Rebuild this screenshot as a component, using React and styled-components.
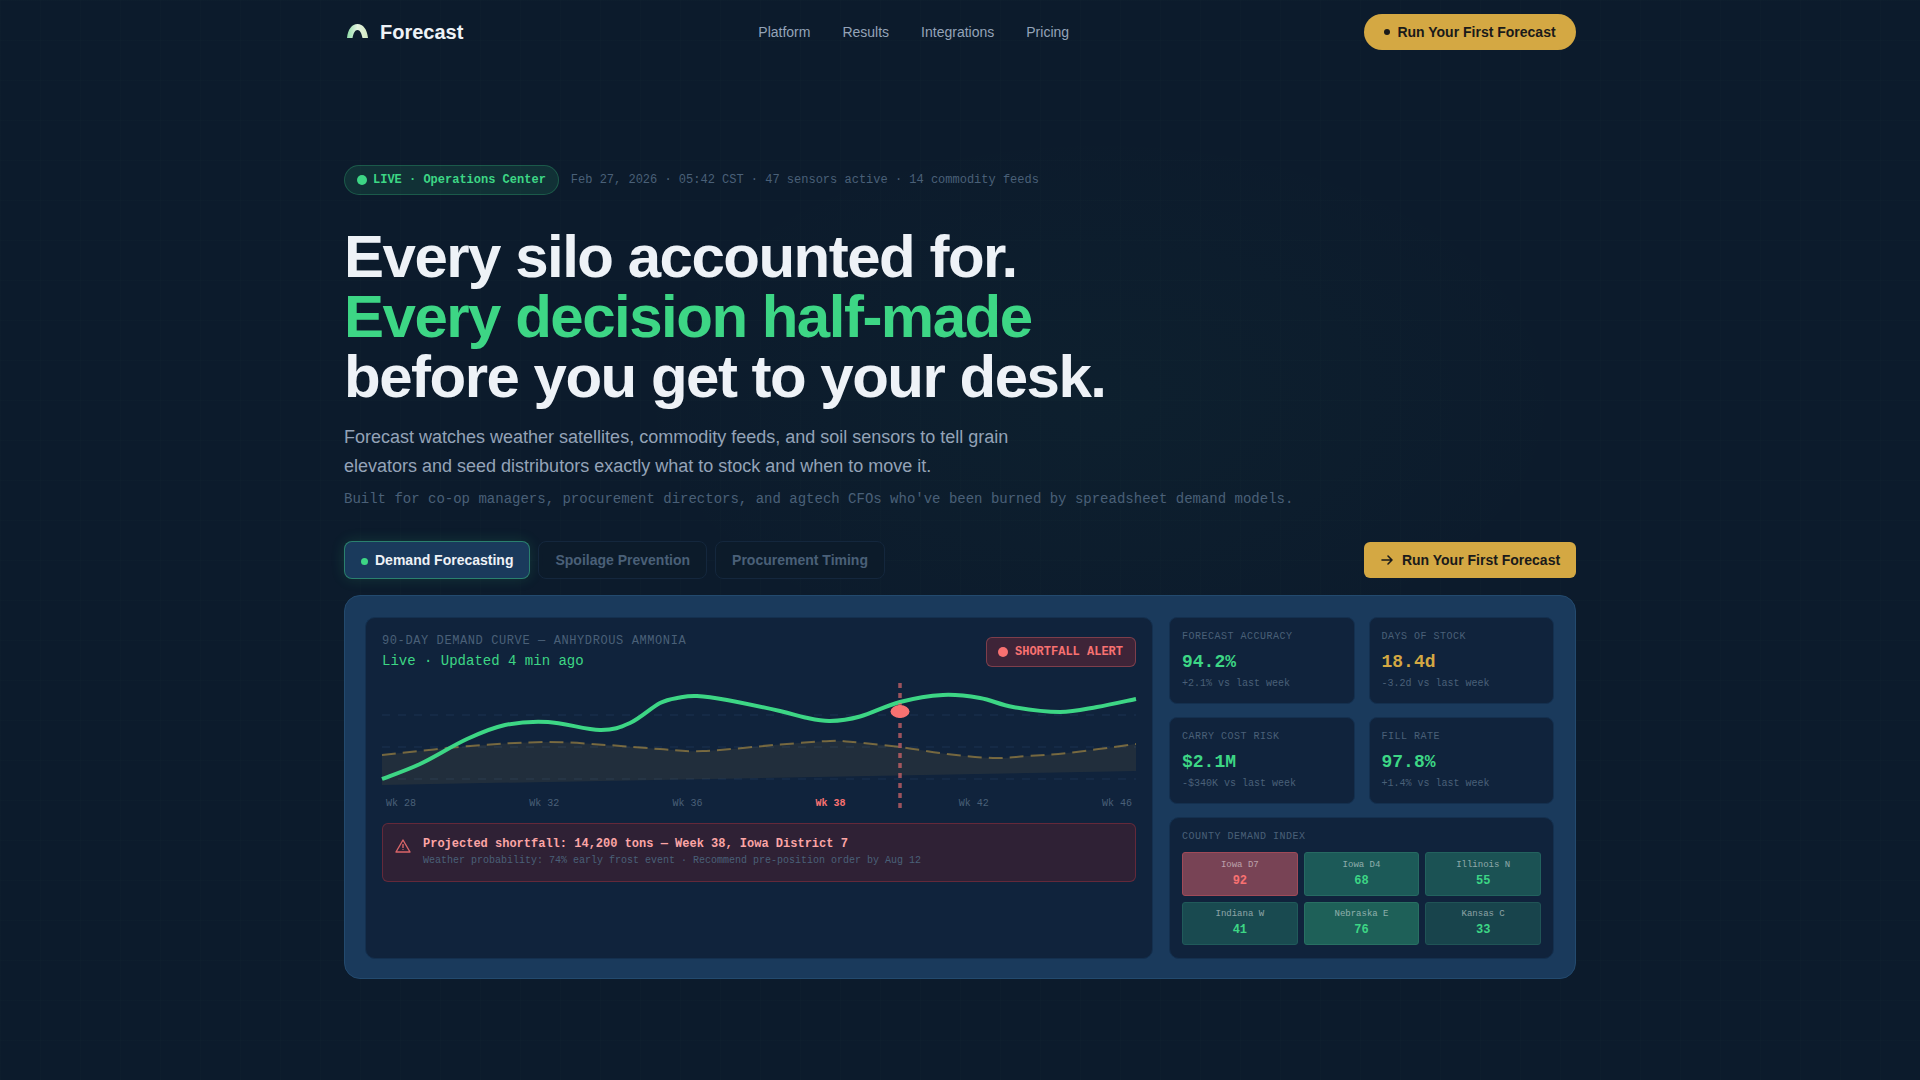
import React from "react";
import styled, { createGlobalStyle } from "styled-components";

const MONO = `"Liberation Mono", monospace`;
const SANS = `"Liberation Sans", Arial, sans-serif`;
const GREEN = "#3dd685";
const GOLD = "#d4a843";
const RED = "#f87171";
const CARD = "#10233c";

const Global = createGlobalStyle`
  html, body { margin: 0; padding: 0; }
  body {
    min-height: 100vh;
    font-family: ${SANS};
    color: #eef2f7;
    background-color: #0c1b2c;
    background-image:
      radial-gradient(ellipse 700px 400px at 1100px 400px, rgba(61,214,133,0.025), transparent 70%),
      linear-gradient(rgba(140,200,180,0.012) 1px, transparent 1px),
      linear-gradient(90deg, rgba(140,200,180,0.012) 1px, transparent 1px);
    background-size: 100% 100%, 40px 40px, 40px 40px;
  }
  * { box-sizing: border-box; }
`;

const Page = styled.div`
  width: 1280px;
  margin: 0 auto;
  padding: 0 24px;
`;
const Nav = styled.nav`
  height: 64px;
  display: flex;
  align-items: center;
  justify-content: space-between;
`;
const Brand = styled.div`
  display: flex;
  align-items: center;
  gap: 12px;
  font-size: 20px;
  font-weight: 600;
  color: #eef2f7;
  padding-left: 3px;
`;
const LogoSvg = styled.svg`
  margin-bottom: 3px;
`;
const NavLinks = styled.div`
  display: flex;
  gap: 32px;
  font-size: 14px;
  color: #94a3b8;
`;
const NavButton = styled.button`
  height: 36px;
  width: 212px;
  border: none;
  border-radius: 18px;
  background: ${GOLD};
  color: #1a1a1a;
  font: 700 14px ${SANS};
  display: flex;
  align-items: center;
  justify-content: center;
  gap: 7px;
  padding: 0;
`;
const BlackDot = styled.span`
  width: 6px;
  height: 6px;
  border-radius: 50%;
  background: #1a1a1a;
`;
const Hero = styled.main`
  padding-top: 101px;
`;
const Status = styled.div`
  display: flex;
  align-items: center;
  gap: 12px;
`;
const Pill = styled.div`
  height: 30px;
  padding: 0 12px;
  display: flex;
  align-items: center;
  gap: 6px;
  border-radius: 15px;
  background: rgba(61,214,133,0.12);
  border: 1px solid rgba(61,214,133,0.25);
  color: ${GREEN};
  font: 700 12px ${MONO};
`;
const PillDot = styled.span`
  width: 10px;
  height: 10px;
  border-radius: 50%;
  background: ${GREEN};
`;
const Meta = styled.span`
  font: 12px ${MONO};
  color: #4a6078;
`;
const Title = styled.h1`
  margin: 32px 0 0;
  font-size: 60px;
  line-height: 60px;
  font-weight: 700;
  letter-spacing: -1.5px;
  color: #eef2f7;
`;
const Accent = styled.span`
  display: block;
  color: ${GREEN};
`;
const Lead = styled.p`
  margin: 16px 0 0;
  width: 720px;
  font-size: 18px;
  line-height: 29px;
  color: #94a3b8;
`;
const Audience = styled.p`
  margin: 8px 0 0;
  font: 14px/21px ${MONO};
  color: #4a6078;
`;
const TabRow = styled.div`
  margin-top: 31px;
  display: flex;
  align-items: center;
  gap: 8px;
`;
const Tab = styled.button`
  height: 38px;
  padding: 0 16px;
  border-radius: 8px;
  font: 700 14px ${SANS};
  display: flex;
  align-items: center;
  gap: 7px;
  color: ${(p) => (p.$active ? "#eef2f7" : "#4a6078")};
  background: ${(p) => (p.$active ? "#1a3a5c" : "rgba(13,27,42,0.85)")};
  border: 1px solid ${(p) => (p.$active ? "rgba(61,214,133,0.45)" : "#14273d")};
  box-shadow: ${(p) => (p.$active ? "0 0 14px rgba(61,214,133,0.15)" : "none")};
`;
const TabDot = styled.span`
  width: 7px;
  height: 7px;
  margin-top: 3px;
  border-radius: 50%;
  background: ${GREEN};
`;
const RunButton = styled.button`
  margin-left: auto;
  height: 36px;
  width: 212px;
  border: none;
  border-radius: 6px;
  background: ${GOLD};
  color: #1a1a1a;
  font: 700 14px ${SANS};
  display: flex;
  align-items: center;
  justify-content: center;
  gap: 8px;
  padding: 0;
`;
const Panel = styled.section`
  margin-top: 16px;
  height: 384px;
  padding: 21px 21px 20px 20px;
  border-radius: 16px;
  background: #1a3a5c;
  border: 1px solid #234a6e;
  display: grid;
  grid-template-columns: 788px 1fr;
  gap: 16px;
`;
const ChartCard = styled.div`
  border-radius: 10px;
  background: ${CARD};
  border: 1px solid #14304f;
  padding: 16px 16px 15px 16px;
`;
const ChartHead = styled.div`
  display: flex;
  justify-content: space-between;
  align-items: flex-start;
`;
const ChartTitle = styled.div`
  font: 12px/14px ${MONO};
  letter-spacing: 0.6px;
  color: #4a6078;
`;
const ChartLive = styled.div`
  margin-top: 5px;
  font: 14px/16px ${MONO};
  color: ${GREEN};
`;
const AlertBadge = styled.div`
  margin-top: 3px;
  height: 30px;
  width: 150px;
  padding: 0 11px;
  display: flex;
  align-items: center;
  gap: 7px;
  border-radius: 6px;
  background: rgba(150,40,50,0.35);
  border: 1px solid rgba(248,113,113,0.35);
  color: ${RED};
  font: 700 12px ${MONO};
  white-space: nowrap;
`;
const AlertDot = styled.span`
  flex: none;
  width: 10px;
  height: 10px;
  border-radius: 50%;
  background: ${RED};
`;
const ChartArea = styled.div`
  margin-top: 14px;
`;
const ChartSvg = styled.svg`
  display: block;
  width: 754px;
  height: 107px;
  overflow: visible;
`;
const Weeks = styled.div`
  margin-top: 8px;
  padding: 0 4px;
  display: flex;
  justify-content: space-between;
  font: 10px/12px ${MONO};
  color: #4a6078;
`;
const Week = styled.span`
  color: ${(p) => (p.$hot ? RED : "inherit")};
  font-weight: ${(p) => (p.$hot ? 700 : 400)};
`;
const Shortfall = styled.div`
  margin-top: 13px;
  height: 59px;
  padding: 0 12px;
  display: flex;
  align-items: center;
  gap: 12px;
  border-radius: 6px;
  background: rgba(120,30,40,0.3);
  border: 1px solid rgba(200,60,70,0.35);
`;
const ShortfallBody = styled.div`
  margin-bottom: 2px;
`;
const ShortfallTitle = styled.div`
  font: 700 12px/15px ${MONO};
  color: #fca5a5;
`;
const ShortfallSub = styled.div`
  margin-top: 3px;
  font: 10px/12px ${MONO};
  color: #4a6078;
`;
const WarnSvg = styled.svg`
  flex: none;
  margin-bottom: 14px;
`;
const Side = styled.div`
  display: flex;
  flex-direction: column;
  gap: 13px;
`;
const Metrics = styled.div`
  display: grid;
  grid-template-columns: 1fr 1fr;
  gap: 13px 14px;
`;
const Metric = styled.div`
  height: 87px;
  padding: 13px 12px;
  border-radius: 8px;
  background: ${CARD};
  border: 1px solid #14304f;
`;
const Label = styled.div`
  font: 10px/12px ${MONO};
  letter-spacing: 0.5px;
  color: #4a6078;
`;
const Value = styled.div`
  margin-top: 9px;
  font: 700 18px/20px ${MONO};
  color: ${(p) => p.$color};
`;
const Delta = styled.div`
  margin-top: 6px;
  font: 10px/12px ${MONO};
  color: #4a6078;
`;
const County = styled.div`
  flex: 1;
  padding: 13px 12px;
  border-radius: 10px;
  background: ${CARD};
  border: 1px solid #14304f;
`;
const CountyGrid = styled.div`
  margin-top: 9px;
  display: grid;
  grid-template-columns: repeat(3, 1fr);
  gap: 6px;
`;
const Cell = styled.div`
  height: 43.5px;
  border-radius: 3px;
  display: flex;
  flex-direction: column;
  align-items: center;
  justify-content: center;
  gap: 3px;
  background: ${(p) => p.$bg};
  border: 1px solid ${(p) => p.$line};
`;
const CellName = styled.div`
  font: 9px/11px ${MONO};
  color: rgba(255,255,255,0.5);
`;
const CellValue = styled.div`
  font: 700 12px/14px ${MONO};
  color: ${(p) => p.$color};
`;

function smooth(pts) {
  let d = `M${pts[0][0]} ${pts[0][1]}`;
  for (let i = 0; i < pts.length - 1; i++) {
    const p0 = pts[i - 1] || pts[i];
    const p1 = pts[i];
    const p2 = pts[i + 1];
    const p3 = pts[i + 2] || p2;
    const c1x = p1[0] + (p2[0] - p0[0]) / 6;
    const c1y = p1[1] + (p2[1] - p0[1]) / 6;
    const c2x = p2[0] - (p3[0] - p1[0]) / 6;
    const c2y = p2[1] - (p3[1] - p1[1]) / 6;
    d += ` C${c1x.toFixed(1)} ${c1y.toFixed(1)} ${c2x.toFixed(1)} ${c2y.toFixed(1)} ${p2[0]} ${p2[1]}`;
  }
  return d;
}
const toLocal = (list) => list.map(([x, y]) => [x - 382, y - 683]);
const demand = toLocal([
  [382, 779], [420, 764], [467, 739], [505, 725], [548, 722], [600, 730],
  [630, 723], [660, 703], [680, 697.5], [697, 696], [727, 700], [780, 711], [805, 717.5], [830, 721],
  [860, 716.5], [900, 702], [943, 695], [980, 698], [1013, 707], [1060, 712], [1097, 707], [1136, 699],
]);
const supply = toLocal([
  [382, 755], [470, 746], [546, 742], [607, 745], [660, 749], [703, 751],
  [780, 744.5], [830, 741], [853, 742], [900, 747], [947, 754], [993, 758], [1027, 756],
  [1067, 753], [1136, 744],
]);
const supplyPath = smooth(supply);
const demandPath = smooth(demand);

const Chart = () => (
  <ChartSvg viewBox="0 0 754 107">
    {[32, 64, 96].map((y) => (
      <line key={y} x1="0" x2="754" y1={y} y2={y} stroke="#1a3350" strokeWidth="1" strokeDasharray="8 8" />
    ))}
    <path d={`${supplyPath} L754 88 L0 102 Z`} fill={GOLD} fillOpacity="0.09" />
    <path d={supplyPath} fill="none" stroke={GOLD} strokeOpacity="0.5" strokeWidth="2" strokeDasharray="14 7" />
    <path d={demandPath} fill="none" stroke={GREEN} strokeWidth="4" />
    <line x1="518" x2="518" y1="0" y2="125" stroke={RED} strokeOpacity="0.6" strokeWidth="3.5" strokeDasharray="5 5" />
    <ellipse cx="518" cy="28.5" rx="9.5" ry="6.5" fill={RED} />
  </ChartSvg>
);

const LogoMark = () => (
  <LogoSvg width="21" height="14" viewBox="0 0 21 14">
    <defs>
      <linearGradient id="arch" x1="0" y1="0" x2="1" y2="0">
        <stop offset="0" stopColor="#8fdca8" />
        <stop offset="0.5" stopColor="#e4f3e0" />
        <stop offset="1" stopColor="#d4e8c0" />
      </linearGradient>
    </defs>
    <path d="M0 14 C1 5 5 0 10.5 0 C16 0 20 5 21 14 L15.5 14 C14.5 9 13 6 10.5 6 C8 6 6.5 9 5.5 14 Z" fill="url(#arch)" />
  </LogoSvg>
);

const WarnIcon = () => (
  <WarnSvg width="16" height="14" viewBox="0 0 16 14" fill="none" stroke={RED} strokeOpacity="0.85" strokeWidth="1.4" strokeLinejoin="round">
    <path d="M8 1 L15 13 L1 13 Z" />
    <path d="M8 5 V9 M8 10.2 V11" />
  </WarnSvg>
);

const ArrowIcon = () => (
  <svg width="14" height="14" viewBox="0 0 14 14" fill="none" stroke="#1a1a1a" strokeWidth="1.6" strokeLinecap="round" strokeLinejoin="round">
    <path d="M2 7 H12 M8 3 L12 7 L8 11" />
  </svg>
);

const metrics = [
  ["FORECAST ACCURACY", "94.2%", GREEN, "+2.1% vs last week"],
  ["DAYS OF STOCK", "18.4d", GOLD, "-3.2d vs last week"],
  ["CARRY COST RISK", "$2.1M", GREEN, "-$340K vs last week"],
  ["FILL RATE", "97.8%", GREEN, "+1.4% vs last week"],
];
const counties = [
  ["Iowa D7", "92", "#784355", "#a04a58", RED],
  ["Iowa D4", "68", "#1c5a58", "#266a62", GREEN],
  ["Illinois N", "55", "#1b5254", "#22625e", GREEN],
  ["Indiana W", "41", "#194a50", "#205a5a", GREEN],
  ["Nebraska E", "76", "#1e6058", "#287062", GREEN],
  ["Kansas C", "33", "#18444c", "#205456", GREEN],
];

export default function App() {
  return (
    <Page>
      <Global />
      <Nav>
        <Brand><LogoMark />Forecast</Brand>
        <NavLinks>
          <span>Platform</span>
          <span>Results</span>
          <span>Integrations</span>
          <span>Pricing</span>
        </NavLinks>
        <NavButton><BlackDot />Run Your First Forecast</NavButton>
      </Nav>
      <Hero>
        <Status>
          <Pill><PillDot />LIVE · Operations Center</Pill>
          <Meta>Feb 27, 2026 · 05:42 CST · 47 sensors active · 14 commodity feeds</Meta>
        </Status>
        <Title>
          Every silo accounted for.
          <Accent>Every decision half-made</Accent>
          before you get to your desk.
        </Title>
        <Lead>
          Forecast watches weather satellites, commodity feeds, and soil sensors to tell grain elevators and seed distributors exactly what to stock and when to move it.
        </Lead>
        <Audience>
          Built for co-op managers, procurement directors, and agtech CFOs who've been burned by spreadsheet demand models.
        </Audience>
        <TabRow>
          <Tab $active><TabDot />Demand Forecasting</Tab>
          <Tab>Spoilage Prevention</Tab>
          <Tab>Procurement Timing</Tab>
          <RunButton><ArrowIcon />Run Your First Forecast</RunButton>
        </TabRow>
        <Panel>
          <ChartCard>
            <ChartHead>
              <div>
                <ChartTitle>90-DAY DEMAND CURVE — ANHYDROUS AMMONIA</ChartTitle>
                <ChartLive>Live · Updated 4 min ago</ChartLive>
              </div>
              <AlertBadge><AlertDot />SHORTFALL ALERT</AlertBadge>
            </ChartHead>
            <ChartArea>
              <Chart />
              <Weeks>
                <Week>Wk 28</Week>
                <Week>Wk 32</Week>
                <Week>Wk 36</Week>
                <Week $hot>Wk 38</Week>
                <Week>Wk 42</Week>
                <Week>Wk 46</Week>
              </Weeks>
            </ChartArea>
            <Shortfall>
              <WarnIcon />
              <ShortfallBody>
                <ShortfallTitle>Projected shortfall: 14,200 tons — Week 38, Iowa District 7</ShortfallTitle>
                <ShortfallSub>Weather probability: 74% early frost event · Recommend pre-position order by Aug 12</ShortfallSub>
              </ShortfallBody>
            </Shortfall>
          </ChartCard>
          <Side>
            <Metrics>
              {metrics.map(([l, v, c, d]) => (
                <Metric key={l}>
                  <Label>{l}</Label>
                  <Value $color={c}>{v}</Value>
                  <Delta>{d}</Delta>
                </Metric>
              ))}
            </Metrics>
            <County>
              <Label>COUNTY DEMAND INDEX</Label>
              <CountyGrid>
                {counties.map(([n, v, bg, line, c]) => (
                  <Cell key={n} $bg={bg} $line={line}>
                    <CellName>{n}</CellName>
                    <CellValue $color={c}>{v}</CellValue>
                  </Cell>
                ))}
              </CountyGrid>
            </County>
          </Side>
        </Panel>
      </Hero>
    </Page>
  );
}
